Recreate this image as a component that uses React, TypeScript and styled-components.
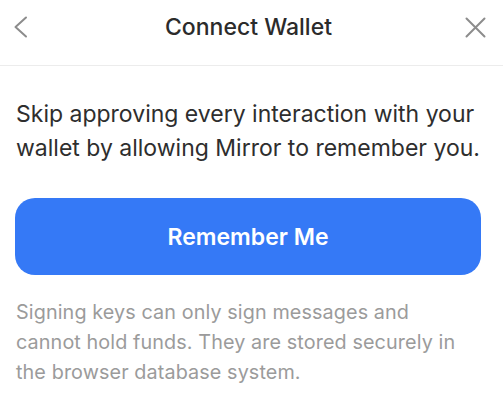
import React from "react";
import styled, { createGlobalStyle } from "styled-components";

const GlobalStyle = createGlobalStyle`
  html, body {
    margin: 0;
    padding: 0;
    background: #ffffff;
  }
  body {
    font-family: Inter, "Noto Sans", sans-serif;
    -webkit-font-smoothing: antialiased;
  }
`;

const Sheet = styled.div`
  width: 503px;
  height: 400px;
  overflow: hidden;
  background: #ffffff;
  display: flex;
  flex-flow: column;
`;

const Header = styled.div`
  flex-shrink: 0;
  height: 66px;
  box-sizing: border-box;
  padding-top: 13px;
  display: grid;
  grid-template-columns: 57px 1fr 63px;
  align-items: start;
  border-bottom: 1px solid #ececec;
`;

const IconButton = styled.button<{ $align: "start" | "end" }>`
  height: 28px;
  border: none;
  background: none;
  padding: 0;
  display: flex;
  align-items: center;
  justify-content: ${(p) => (p.$align === "start" ? "flex-start" : "flex-end")};
  padding-left: ${(p) => (p.$align === "start" ? "13px" : "0")};
  padding-right: ${(p) => (p.$align === "end" ? "17px" : "0")};
  color: #8c8c8c;
  cursor: pointer;
`;

const Title = styled.h1`
  margin: 0;
  text-align: center;
  font-size: 23px;
  line-height: 28px;
  font-weight: 500;
  color: #2b2b2b;
`;

const Body = styled.div`
  flex-shrink: 0;
  padding: 32px 22px 0 15px;
  display: flex;
  flex-flow: column;
`;

const Lead = styled.p`
  margin: 0;
  padding-left: 1px;
  font-size: 23px;
  line-height: 33.5px;
  color: #2e2e2e;
`;

const PrimaryButton = styled.button`
  flex-shrink: 0;
  margin-top: 33px;
  height: 77px;
  width: 100%;
  border: none;
  border-radius: 20px;
  background: #3579f6;
  color: #ffffff;
  font-family: Inter, "Noto Sans", sans-serif;
  font-size: 23px;
  font-weight: 600;
  cursor: pointer;
`;

const Note = styled.p`
  margin: 22px 0 0 0;
  padding: 0 16px 0 1px;
  font-size: 19.8px;
  line-height: 30px;
  letter-spacing: 0.1px;
  color: #9b9b9b;
`;

const ChevronLeft = () => (
  <svg width="15" height="22" viewBox="0 0 15 22" fill="none">
    <path d="M13 1.5 L2.5 11 L13 20.5" stroke="currentColor" strokeWidth="2" strokeLinecap="round" strokeLinejoin="round" />
  </svg>
);

const CloseIcon = () => (
  <svg width="21" height="21" viewBox="0 0 21 21" fill="none">
    <path d="M1.5 1.5 L19.5 19.5 M19.5 1.5 L1.5 19.5" stroke="currentColor" strokeWidth="2" strokeLinecap="round" />
  </svg>
);

const App = () => {
  return (
    <Sheet>
      <GlobalStyle />
      <Header>
        <IconButton $align="start" aria-label="Back">
          <ChevronLeft />
        </IconButton>
        <Title>Connect Wallet</Title>
        <IconButton $align="end" aria-label="Close">
          <CloseIcon />
        </IconButton>
      </Header>
      <Body>
        <Lead>
          Skip approving every interaction with your wallet by allowing
          Mirror to remember you.
        </Lead>
        <PrimaryButton>Remember Me</PrimaryButton>
        <Note>
          Signing keys can only sign messages and cannot hold funds. They are
          stored securely in the browser database system.
        </Note>
      </Body>
    </Sheet>
  );
};

export default App;
